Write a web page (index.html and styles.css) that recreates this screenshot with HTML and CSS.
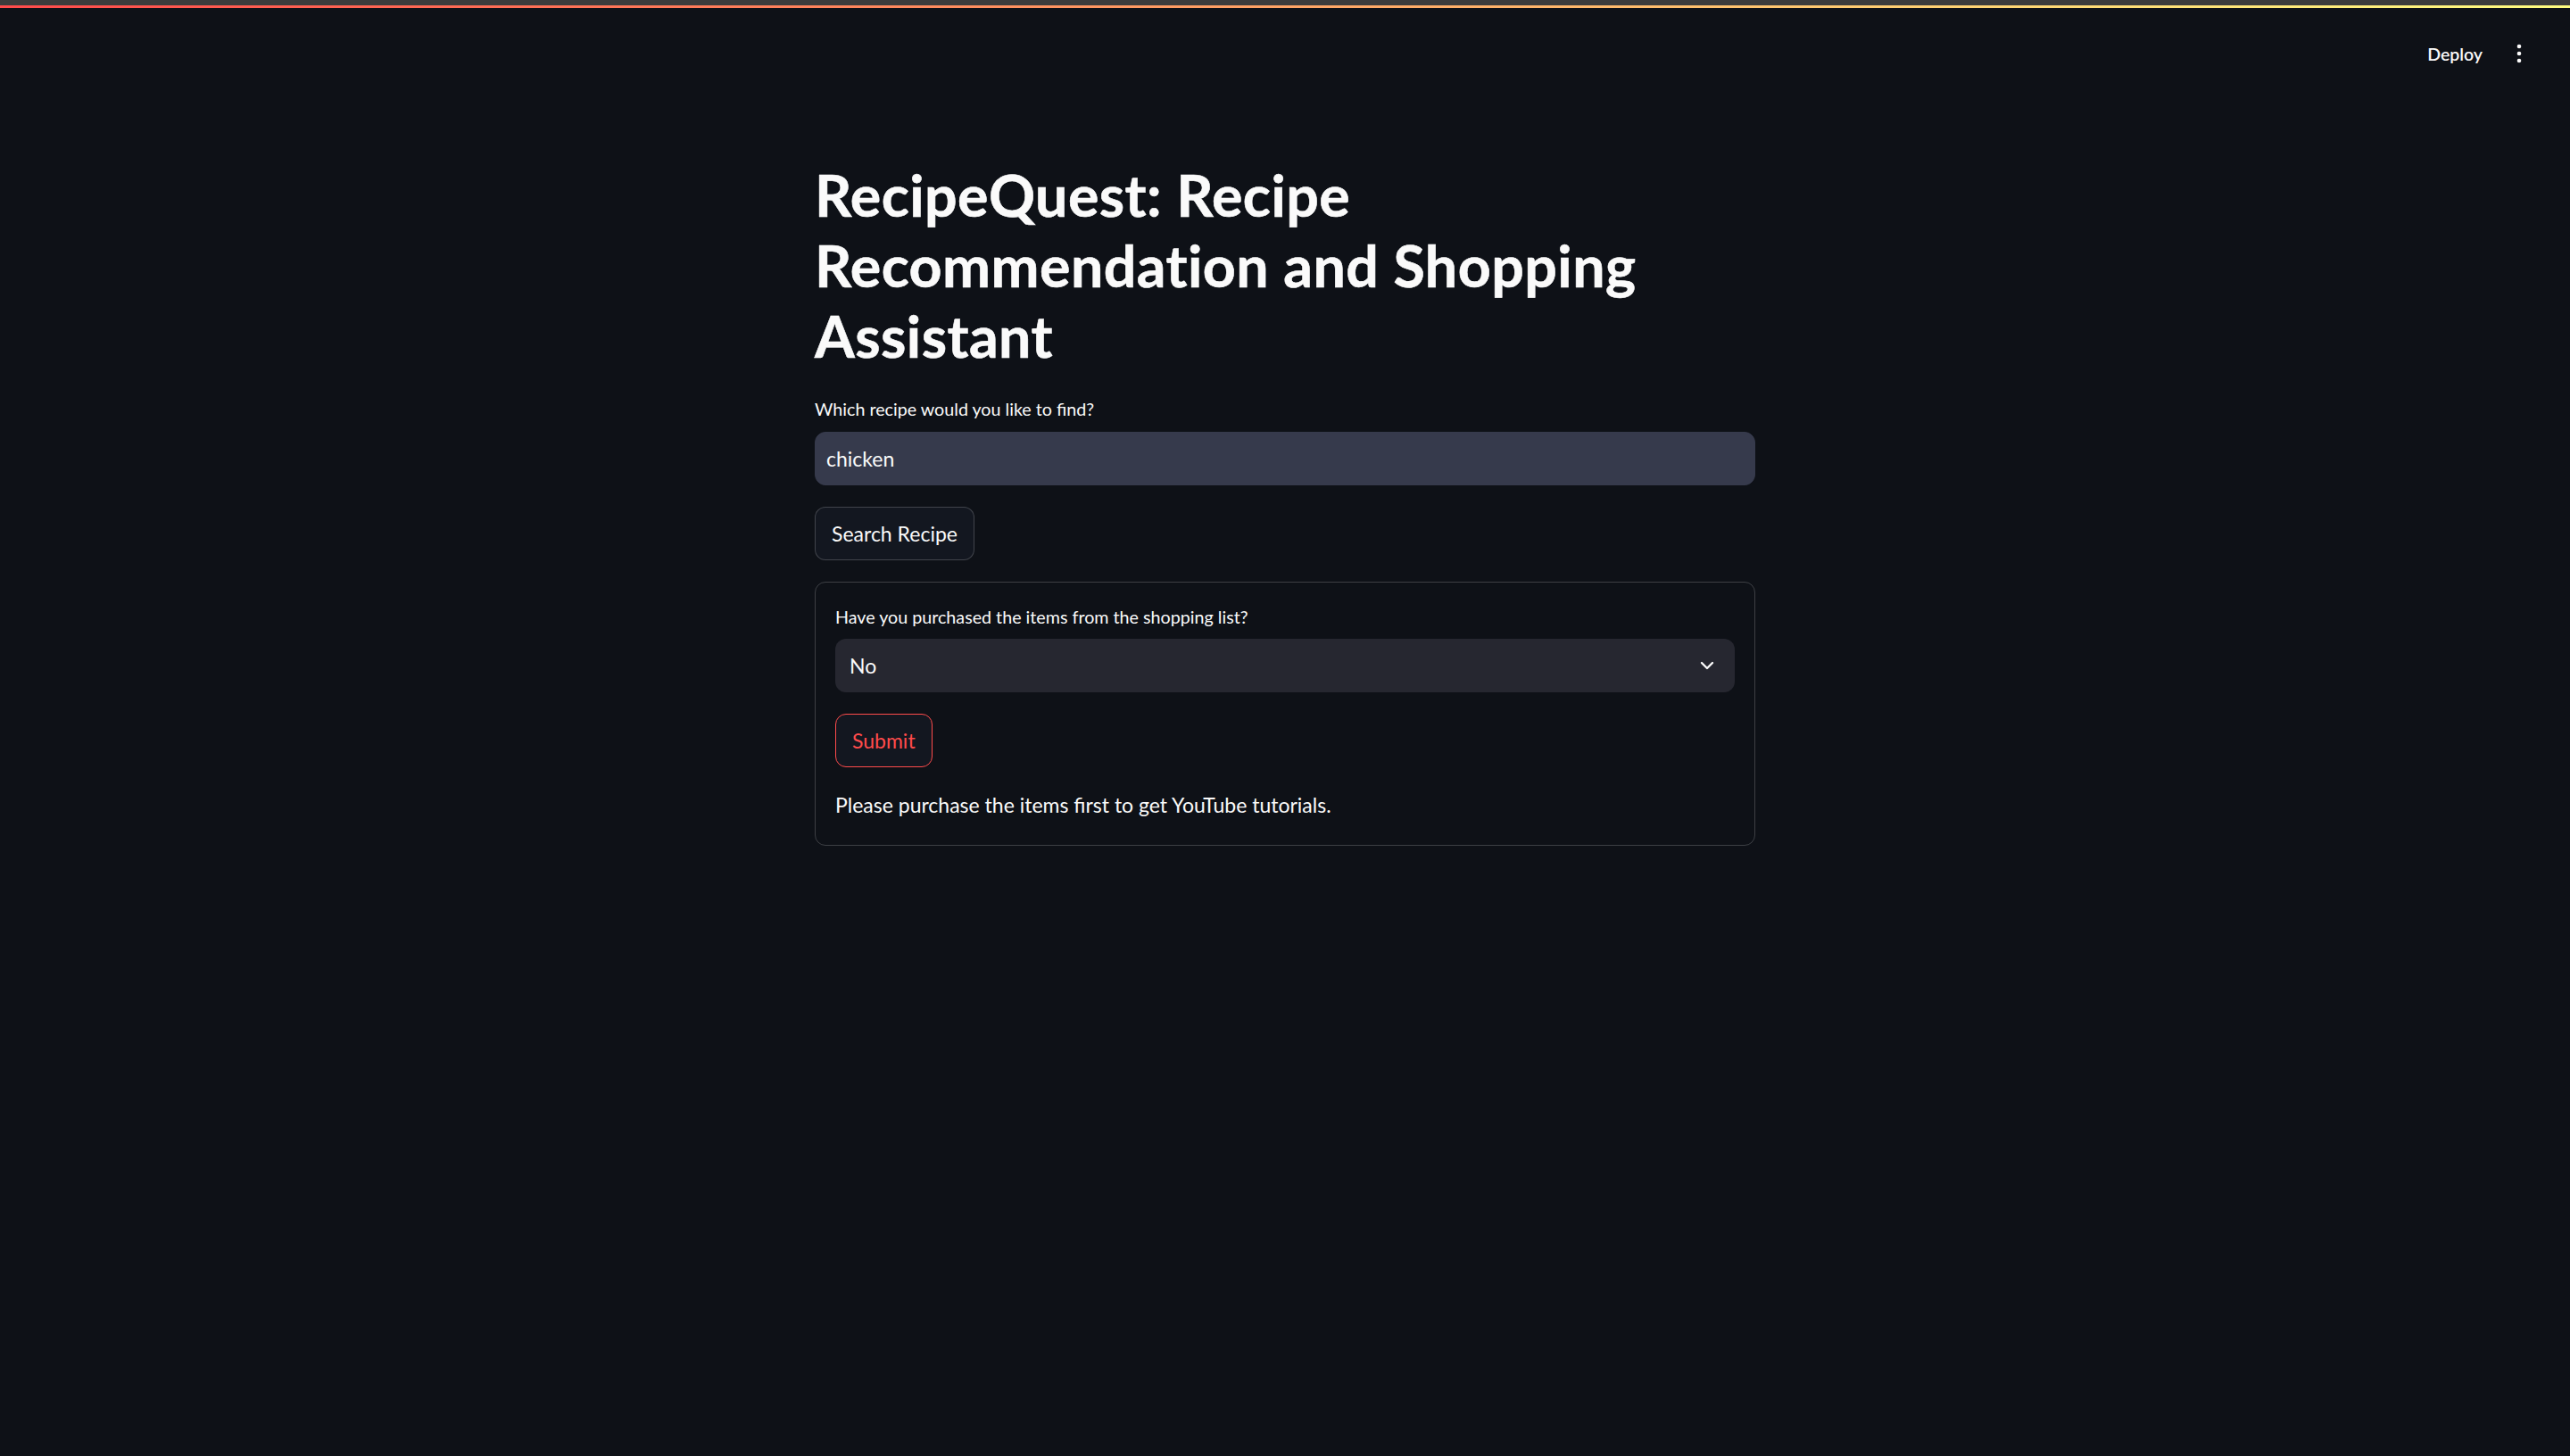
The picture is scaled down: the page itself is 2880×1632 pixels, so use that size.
FILE: index.html
```html
<!DOCTYPE html>
<html lang="en">
<head>
<meta charset="utf-8">
<title>RecipeQuest</title>
<link rel="stylesheet" href="styles.css">
</head>
<body>
<div class="chrome-band"></div>
<div class="decoration"></div>
<header class="toolbar">
  <span class="deploy">Deploy</span>
  <span class="menu" aria-label="Main menu">
    <svg width="6" height="22" viewBox="0 0 6 22"><circle cx="3" cy="3" r="2.3" fill="#fafafa"/><circle cx="3" cy="11" r="2.3" fill="#fafafa"/><circle cx="3" cy="19" r="2.3" fill="#fafafa"/></svg>
  </span>
</header>
<main class="main">
  <h1 class="title">RecipeQuest: Recipe Recommendation and Shopping Assistant</h1>
  <label class="label">Which recipe would you like to find?</label>
  <div class="text-input">chicken</div>
  <button class="btn">Search Recipe</button>
  <section class="form">
    <label class="label">Have you purchased the items from the shopping list?</label>
    <div class="select">
      <span>No</span>
      <svg class="chev" width="16" height="10" viewBox="0 0 16 10"><path d="M2 2 L8 8 L14 2" fill="none" stroke="#fafafa" stroke-width="2.4" stroke-linecap="round" stroke-linejoin="round"/></svg>
    </div>
    <button class="btn btn-primary">Submit</button>
    <p class="para">Please purchase the items first to get YouTube tutorials.</p>
  </section>
</main>
</body>
</html>
```
FILE: styles.css
```css
html, body {
  margin: 0;
  padding: 0;
  background: #0e1117;
  color: #fafafa;
  font-family: "Lato", "Liberation Sans", sans-serif;
  min-height: 1632px;
}
.chrome-band {
  height: 6px;
  background: #3c3c3c;
}
.decoration {
  height: 3px;
  background: linear-gradient(90deg, rgb(255, 75, 75), rgb(255, 253, 128));
}
.toolbar {
  height: 104px;
  display: flex;
  align-items: center;
  justify-content: flex-end;
  padding-right: 54px;
  gap: 38px;
}
.deploy {
  font-size: 19.5px;
  font-weight: 600;
  line-height: 30px;
}
.menu {
  display: flex;
  align-items: center;
  height: 30px;
  margin-top: -2px;
}
.main {
  width: 1054px;
  margin: 0 auto;
  padding-top: 66px;
  display: flex;
  flex-direction: column;
  align-items: flex-start;
}
.title {
  margin: 0 0 27px 0;
  font-size: 64.5px;
  font-weight: 700;
  line-height: 79.2px;
  letter-spacing: 0.45px;
  -webkit-text-stroke: 0.6px #fafafa;
}
.label {
  display: block;
  font-size: 19.7px;
  line-height: 30px;
  margin-bottom: 10px;
}
.text-input {
  box-sizing: border-box;
  width: 100%;
  height: 60px;
  background: #363a4c;
  border: 1px solid #363a4c;
  border-radius: 12px;
  padding: 0 12px;
  display: flex;
  align-items: center;
  font-size: 23px;
  margin-bottom: 24px;
}
.btn {
  box-sizing: border-box;
  height: 60px;
  padding: 0 18px;
  background: rgb(19, 23, 32);
  color: #fafafa;
  border: 1.5px solid rgba(250, 250, 250, 0.2);
  border-radius: 12px;
  font-family: inherit;
  font-size: 23px;
  margin: 0 0 24px 0;
}
.btn-primary {
  color: #ff4b4b;
  border-color: #ff4b4b;
  margin-bottom: 23px;
}
.form {
  box-sizing: border-box;
  width: 100%;
  border: 1.5px solid rgba(250, 250, 250, 0.2);
  border-radius: 12px;
  padding: 24px 22px 26px;
  display: flex;
  flex-direction: column;
  align-items: flex-start;
}
.form .label {
  margin-bottom: 9px;
}
.select {
  box-sizing: border-box;
  width: 100%;
  height: 60px;
  background: #262730;
  border-radius: 12px;
  padding: 0 23px 0 16px;
  display: flex;
  align-items: center;
  justify-content: space-between;
  font-size: 23px;
  margin-bottom: 24px;
}
.para {
  margin: 0;
  font-size: 23px;
  line-height: 38.4px;
}
```
